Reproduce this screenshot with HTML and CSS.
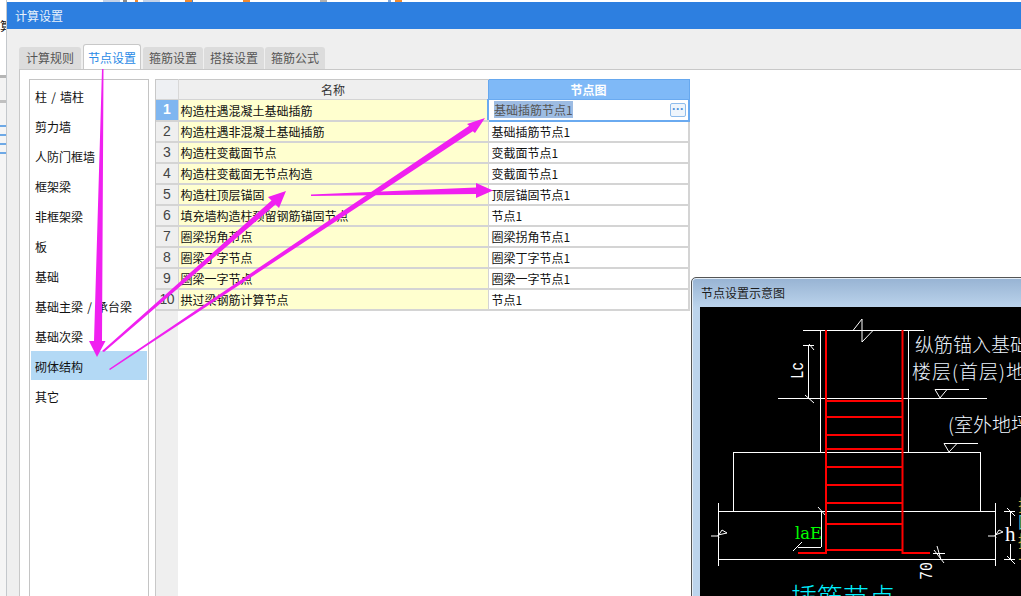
FILE: index.html
```html
<!DOCTYPE html>
<html lang="zh">
<head>
<meta charset="utf-8">
<title>计算设置</title>
<link rel="stylesheet" href="styles.css">
</head>
<body>
<div class="desktop">
  <div class="behind">
    <div class="behind-top"></div>
    <div class="behind-text">算</div>
    <div class="behind-band"></div>
    <div class="behind-rows"><i></i><i></i><i></i><i></i></div>
  </div>
  <div class="dialog">
    <div class="top-strip"></div>
    <div class="titlebar">计算设置</div>
    <div class="dialog-body">
      <div class="tabs">
        <div class="tab">计算规则</div>
        <div class="tab active">节点设置</div>
        <div class="tab">箍筋设置</div>
        <div class="tab">搭接设置</div>
        <div class="tab">箍筋公式</div>
      </div>
      <div class="panel">
        <ul class="side">
          <li>柱 / 墙柱</li>
          <li>剪力墙</li>
          <li>人防门框墙</li>
          <li>框架梁</li>
          <li>非框架梁</li>
          <li>板</li>
          <li>基础</li>
          <li>基础主梁 / 承台梁</li>
          <li>基础次梁</li>
          <li class="selected">砌体结构</li>
          <li>其它</li>
        </ul>
        <div class="grid-wrap">
          <table class="grid">
            <colgroup><col class="c-num"><col class="c-name"><col class="c-node"></colgroup>
            <thead>
              <tr><th class="corner"></th><th class="h-name">名称</th><th class="h-node">节点图</th></tr>
            </thead>
            <tbody>
              <tr><td class="num current">1</td><td class="name">构造柱遇混凝土基础插筋</td><td class="node editing"><span class="edit"><span class="sel">基础插筋节点1</span><span class="more">···</span></span></td></tr>
              <tr><td class="num">2</td><td class="name">构造柱遇非混凝土基础插筋</td><td class="node">基础插筋节点1</td></tr>
              <tr><td class="num">3</td><td class="name">构造柱变截面节点</td><td class="node">变截面节点1</td></tr>
              <tr><td class="num">4</td><td class="name">构造柱变截面无节点构造</td><td class="node">变截面节点1</td></tr>
              <tr><td class="num">5</td><td class="name">构造柱顶层锚固</td><td class="node">顶层锚固节点1</td></tr>
              <tr><td class="num">6</td><td class="name">填充墙构造柱预留钢筋锚固节点</td><td class="node">节点1</td></tr>
              <tr><td class="num">7</td><td class="name">圈梁拐角节点</td><td class="node">圈梁拐角节点1</td></tr>
              <tr><td class="num">8</td><td class="name">圈梁丁字节点</td><td class="node">圈梁丁字节点1</td></tr>
              <tr><td class="num">9</td><td class="name">圈梁一字节点</td><td class="node">圈梁一字节点1</td></tr>
              <tr><td class="num">10</td><td class="name">拱过梁钢筋计算节点</td><td class="node">节点1</td></tr>
            </tbody>
          </table>
          <div class="num-rest"></div>
        </div>
      </div>
    </div>
  </div>

  <div class="preview">
    <div class="preview-title">节点设置示意图</div>
    <svg class="drawing" width="321" height="289" viewBox="700 307 321 289" xmlns="http://www.w3.org/2000/svg">
      <g class="w">
        <path d="M803 330.500H924M853 330.500L862 319V342L873 330.500"/>
        <path d="M820.500 330V452M908.500 330V452"/>
        <path d="M778 398.500H987"/>
        <path d="M808.500 345V398M803 345.500H814M809 344L814 350M805 395L814 403"/>
        <path d="M935 389.500H969M935 389.500H947L940 398L935 389.500"/>
        <path d="M944 443.500H978M944 443.500H957L949 452L944 443.500"/>
        <path d="M733.500 452V511M980.500 452V511M733 452.500H981"/>
        <path d="M718 511.500H995M718 559.500H995M718.500 503V566M995.500 503V566"/>
        <path d="M711 536H718L722 530L727 533L718 535L719 538"/>
        <path d="M988 536H995L999 530L1003 532L995 535L996 538"/>
        <path d="M1004 511.500H1015M1004 559.500H1015M1010.500 511V526M1010.500 544V559M1007 508L1015 516M1007 556L1015 564"/>
        <path d="M798 547.500H821M821.500 511V547M818 507L826 516M793 551L802 542"/>
        <path d="M933 553.500H945M934 550L944 563M937 546L941 560"/>
      </g>
      <g class="r">
        <path d="M826 330V553H798M902.500 330V553H930"/>
        <path d="M826 401H902M826 417H902M826 435H902M826 449H902M826 467H902M826 485H902M826 503H902M826 524H902M826 550H902"/>
      </g>
      <text class="cad-small" textLength="17" lengthAdjust="spacingAndGlyphs" transform="translate(803 379) rotate(-90)">Lc</text>
      <text class="cad-green" x="795" y="539" textLength="27" lengthAdjust="spacingAndGlyphs">laE</text>
      <text class="cad-h" x="1005" y="541">h</text>
      <text class="cad-small" textLength="18" lengthAdjust="spacingAndGlyphs" transform="translate(932 580) rotate(-90)">70</text>
      <text class="cad-cn" x="915" y="352">纵筋锚入基础</text>
      <text class="cad-cn wide" x="912" y="379">楼层(首层)地</text>
      <text class="cad-cn" x="948" y="432">(室外地坪</text>
      <text class="cad-title" x="791" y="607">插筋节点一</text>
      <text class="cad-side" x="1018" y="511">搭</text>
      <text class="cad-side2" x="1018" y="528">固</text>
      <text class="cad-side" x="1018" y="547">接</text>
      <text class="cad-side" x="1018" y="566">长</text>
    </svg>
  </div>

  <svg class="arrows" width="1021" height="596" viewBox="0 0 1021 596" xmlns="http://www.w3.org/2000/svg">
    <polygon points="102,69 103.500,69 102,341 105.500,341 97,357 89,341 94,341"/>
    <polygon points="102,351 271.500,200.500 268,197 286,191 279,208 275.500,204.500 104,352"/>
    <polygon points="109,369 469.200,125.800 467,124 485,118 475,133 472.800,131.200 110,370"/>
    <polygon points="311,194.500 476,187.500 476,183 493,190.500 476,198 476,194 311,196"/>
  </svg>
</div>
</body>
</html>
```

FILE: styles.css
```css
* { box-sizing: border-box; }
html, body { margin: 0; padding: 0; }
body {
  width: 1021px;
  height: 596px;
  overflow: hidden;
  background: #fff;
  font-family: "Noto Sans CJK SC", "Liberation Sans", sans-serif;
  font-size: 12px;
  color: #111;
}
.desktop {
  position: relative;
  display: flex;
  width: 1021px;
  height: 596px;
  overflow: hidden;
}

/* application behind the dialog */
.behind {
  flex: 0 0 7px;
  height: 596px;
  overflow: hidden;
  background: #f5f5f5;
  border-right: 1px solid #c4c8cc;
}
.behind-top { height: 18px; background: #fff; }
.behind-text { height: 57px; width: 12px; line-height: 16px; background: #fff; }
.behind-band { height: 28px; background: linear-gradient(#b5b5b5, #b5b5b5 3px, #f3f3f3 3px, #f3f3f3 25px, #c0c0c0 25px); }
.behind-rows { display: flex; flex-direction: column; gap: 7px; padding-top: 22px; }
.behind-rows i { display: block; height: 2px; background: #6ea9e6; }

/* dialog */
.dialog {
  flex: 1 1 auto;
  display: flex;
  flex-direction: column;
  min-width: 0;
  background: #efefef;
}
.top-strip {
  flex: 0 0 2px;
  background: linear-gradient(90deg,
    #fff 96px, #c4d2e8 96px, #c4d2e8 113px, #fff 113px,
    #fff 116px, #8a8a8a 116px, #8a8a8a 120px, #fff 120px,
    #fff 128px, #f08a30 128px, #f08a30 131px, #fff 131px,
    #fff 136px, #c4d2e8 136px, #c4d2e8 153px, #fff 153px,
    #fff 178px, #f08a30 178px, #f08a30 185px, #4a86c8 185px, #4a86c8 186px, #fff 186px,
    #fff 236px, #f08a30 236px, #f08a30 243px, #fff 243px,
    #fff 313px, #b0b0b0 313px, #b0b0b0 320px, #fff 320px,
    #fff 381px, #7fa8dc 381px, #7fa8dc 384px, #fff 384px,
    #fff 388px, #f08a30 388px, #f08a30 395px, #fff 395px);
}
.titlebar {
  flex: 0 0 27px;
  background: #2d7fe0;
  color: #e8f1fb;
  line-height: 27px;
  padding-left: 8px;
}
.dialog-body {
  flex: 1 1 auto;
  display: flex;
  flex-direction: column;
  padding: 15px 0 0 12px;
  min-height: 0;
}
.tabs {
  flex: 0 0 25px;
  display: flex;
  align-items: flex-end;
  gap: 1px;
}
.tab {
  width: 60px;
  height: 22px;
  line-height: 22px;
  text-align: center;
  background: #dcdcdc;
  color: #555;
  border-radius: 3px 3px 0 0;
}
.tab:first-child { width: 62px; }
.tab.active {
  width: 58px;
  height: 25px;
  line-height: 25px;
  margin: 0 1px;
  background: #fff;
  color: #2a8ae6;
  border: 1px solid #c8c8c8;
  border-bottom: 0;
}
.panel {
  flex: 1 1 auto;
  display: flex;
  align-items: stretch;
  gap: 6px;
  background: #fff;
  border-top: 1px solid #c8c8c8;
  border-left: 1px solid #c8c8c8;
  padding: 9px 0 0 9px;
  min-height: 0;
}

/* side list */
.side {
  flex: 0 0 120px;
  margin: 0;
  padding: 1px;
  list-style: none;
  border: 1px solid #c4c4c4;
  border-bottom: 0;
}
.side li {
  height: 30px;
  line-height: 30px;
  padding: 1px 0 0 4px;
  word-spacing: 1.5px;
}
.side li.selected { background: #b3d9f5; height: 29px; margin-bottom: 1px; line-height: 29px; }

/* table */
.grid-wrap {
  flex: 1 1 auto;
  min-width: 0;
  display: flex;
  flex-direction: column;
  border-left: 1px solid #c8c8c8;
}
.grid {
  border-collapse: collapse;
  table-layout: fixed;
  width: 533px;
  flex: 0 0 auto;
}
.c-num { width: 22px; }
.c-name { width: 310px; }
.c-node { width: 201px; }
.grid th {
  height: 20px;
  padding: 0;
  line-height: 18px;
  font-weight: 400;
  background: #efefef;
  color: #333;
  text-align: center;
  border-top: 1px solid #c8c8c8;
  border-bottom: 1px solid #d4d4d4;
}
.grid th.corner { background: #eef0f3; border-right: 1px solid #d8d8d8; }
.grid th.h-node {
  background: #7fb9f7;
  color: #fff;
  font-weight: 700;
  border: 1px solid #66a8ef;
  border-bottom: 0;
}
.grid td {
  height: 21px;
  padding: 1px 0 0 3px;
  border-bottom: 2px solid #d4d4d4;
  border-right: 1px solid #d4d4d4;
  line-height: 17px;
  white-space: nowrap;
  overflow: hidden;
}
.grid td.num {
  padding: 0;
  text-align: center;
  background: #efefef;
  color: #444;
  font-family: "Liberation Sans", sans-serif;
  font-size: 14px;
  letter-spacing: -0.5px;
}
.grid td.num.current { background: #7fb6f0; color: #fff; font-weight: 700; }
.grid td.name { background: #ffffcf; padding-left: 2px; }
.grid td.node { background: #fff; border-right: 2px solid #d4d4d4; }
.grid td.node.editing {
  padding: 0;
  border: 2px solid #6aaaf0;
  border-top: 1px solid #6aaaf0;
}
.edit {
  display: flex;
  align-items: center;
  justify-content: space-between;
  height: 18px;
  padding: 0 2px 0 5px;
}
.sel { background: #9dbce3; color: #555; line-height: 17px; }
.more {
  width: 16px;
  height: 14px;
  line-height: 11px;
  text-align: center;
  color: #4d90d9;
  font-weight: 700;
  font-family: "Liberation Sans", sans-serif;
  background: #eef5fc;
  border: 1px solid #8ebcec;
  border-radius: 2px;
}
.num-rest { flex: 1 1 auto; width: 22px; background: #efefef; }

/* preview window */
.preview {
  position: absolute;
  left: 691px;
  top: 277px;
  width: 340px;
  height: 330px;
  background: linear-gradient(#97b3d3, #bcd4ec 30px, #bcd4ec);
  border: 1px solid #555;
  border-radius: 5px 5px 0 0;
  box-shadow: inset 0 0 0 1px #e5eef7;
  padding: 0 0 0 8px;
}
.preview-title {
  height: 29px;
  line-height: 30px;
  color: #1c1c1c;
  padding-left: 1px;
}
.drawing { display: block; background: #000; }

.w path { fill: none; stroke: #fff; stroke-width: 1; }
.r path { fill: none; stroke: #f00; stroke-width: 2; }
.cad-small { fill: #fff; font-family: "Liberation Mono", monospace; font-size: 18px; }
.cad-green { fill: #0f0; font-family: "DejaVu Serif", serif; font-size: 16px; }
.cad-h { fill: #fff; font-family: "Liberation Serif", serif; font-size: 21px; }
.cad-cn { fill: #eef6ff; font-family: "Noto Sans CJK SC", sans-serif; font-size: 19px; font-weight: 300; }
.cad-cn.wide { letter-spacing: 1px; }
.cad-title { fill: #00f0ff; font-family: "Noto Sans CJK SC", sans-serif; font-size: 26px; font-weight: 300; }
.cad-side { fill: #c9a63a; font-family: "Noto Sans CJK SC", sans-serif; font-size: 16px; }
.cad-side2 { fill: #4fc3c3; font-family: "Noto Sans CJK SC", sans-serif; font-size: 16px; }

/* annotation arrows */
.arrows { position: absolute; left: 0; top: 0; pointer-events: none; }
.arrows polygon { fill: #f020f0; }
```
